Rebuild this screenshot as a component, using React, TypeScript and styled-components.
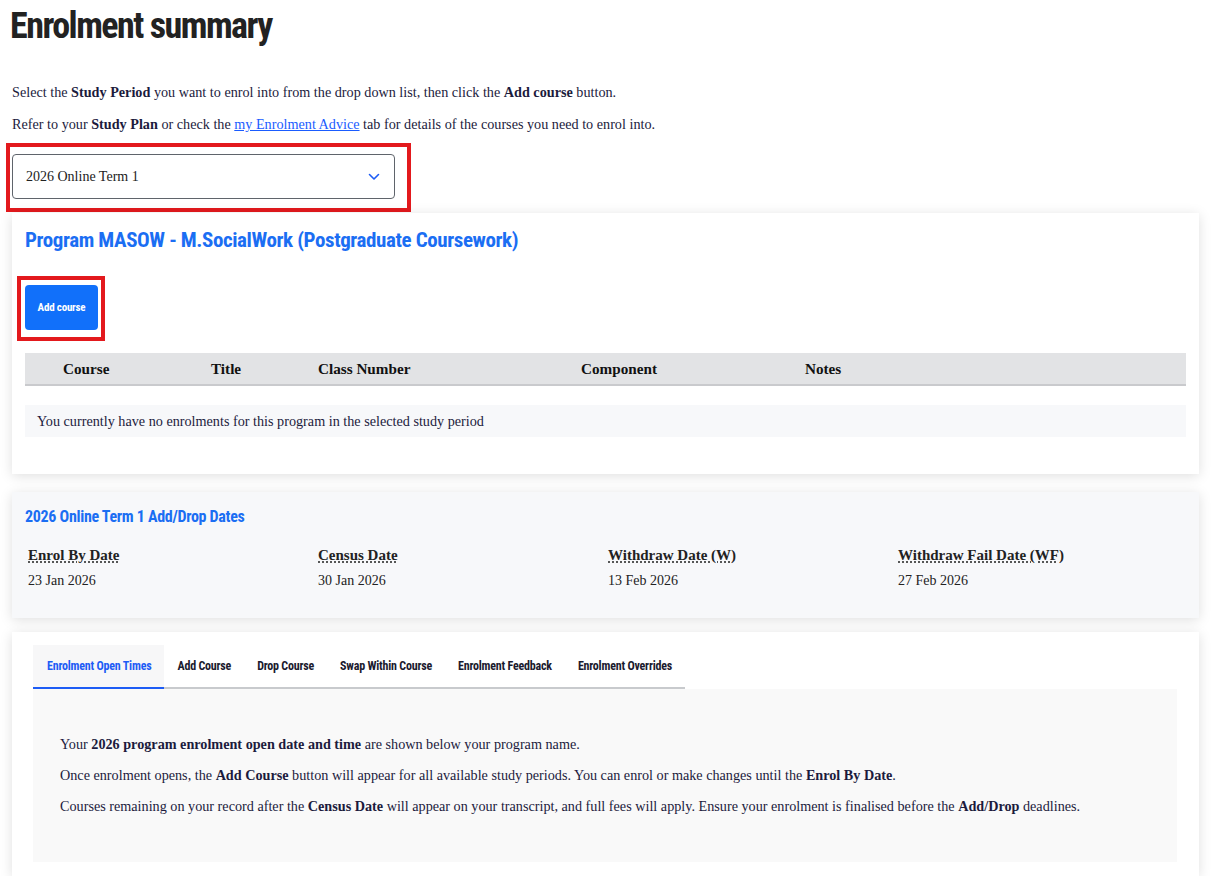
import React from "react";
import styled, { createGlobalStyle } from "styled-components";

const GlobalStyle = createGlobalStyle`
  html, body { margin: 0; padding: 0; background: #fff; }
  body {
    font-family: "Liberation Serif", "DejaVu Serif", serif;
    color: #1c1b3d;
    -webkit-font-smoothing: antialiased;
  }
  * { box-sizing: border-box; }
`;

const condensed = `"Roboto", "Noto Sans", "Open Sans", sans-serif`;

const Page = styled.main`
  padding: 0 24px 0 12px;
  display: flex;
  flex-direction: column;
  align-items: stretch;
`;

const Heading = styled.h1`
  font-family: ${condensed};
  font-stretch: 75%;
  font-weight: 700;
  font-size: 36px;
  line-height: 46px;
  color: #222;
  margin: 3px 0 0 -2px;
  letter-spacing: -1.5px;
`;

const Para = styled.p<{ $top?: number }>`
  font-size: 14.2px;
  line-height: 20px;
  margin: ${(p) => p.$top ?? 0}px 0 0 0;
  b { font-weight: 700; }
  a { color: #1a5cff; text-decoration: underline; }
`;

const Highlight = styled.div<{ $pad: string; $ml: number; $mt: number }>`
  align-self: flex-start;
  border: 4px solid #e3191d;
  padding: ${(p) => p.$pad};
  margin-left: ${(p) => p.$ml}px;
  margin-top: ${(p) => p.$mt}px;
`;

const Select = styled.div`
  width: 383px;
  height: 45px;
  border: 1px solid #5f646b;
  border-radius: 4px;
  display: flex;
  align-items: center;
  justify-content: space-between;
  padding: 0 14px 0 13px;
  font-size: 14px;
  color: #222;
`;

const Card = styled.section<{ $bg?: string; $mt: number }>`
  background: ${(p) => p.$bg ?? "#fff"};
  box-shadow: 0 2px 12px rgba(0, 0, 0, 0.13);
  margin-top: ${(p) => p.$mt}px;
  display: flex;
  flex-direction: column;
`;

const ProgramCard = styled(Card)`
  padding: 14px 13px 37px 13px;
  height: 261px;
`;

const CardTitle = styled.h2<{ $size: number; $ls: number }>`
  font-family: ${condensed};
  font-stretch: 75%;
  font-weight: 700;
  font-size: ${(p) => p.$size}px;
  letter-spacing: ${(p) => p.$ls}px;
  line-height: 1.25;
  color: #1b6ef3;
  margin: 0;
`;

const Button = styled.button`
  width: 73px;
  height: 45px;
  border: none;
  border-radius: 4px;
  background: #1170fa;
  color: #fff;
  font-family: ${condensed};
  font-stretch: 75%;
  font-weight: 700;
  font-size: 11px;
  letter-spacing: -0.2px;
  padding: 0;
`;

const TableHead = styled.div`
  margin-top: 12px;
  height: 33px;
  background: #e2e3e5;
  border-bottom: 2px solid #c9cacd;
  display: grid;
  grid-template-columns: 148px 107px 263px 224px 1fr;
  align-items: center;
  padding-left: 38px;
  font-weight: 700;
  font-size: 15.2px;
  color: #111;
`;

const EmptyRow = styled.div`
  margin-top: 19px;
  height: 32px;
  background: #f7f8fa;
  display: flex;
  align-items: center;
  padding-left: 12px;
  font-size: 14.2px;
`;

const DatesCard = styled(Card)`
  padding: 15px 13px 0 13px;
  height: 126px;
`;

const DatesGrid = styled.div`
  display: grid;
  grid-template-columns: repeat(4, 290px);
  margin-top: 18px;
  padding-left: 3px;
`;

const DateCol = styled.div`
  display: flex;
  flex-direction: column;
  gap: 6px;
`;

const DateLabel = styled.abbr`
  font-weight: 700;
  font-size: 15px;
  line-height: 20px;
  color: #222;
  text-decoration: underline dotted;
  text-underline-offset: 2px;
  align-self: flex-start;
`;

const DateValue = styled.span`
  font-size: 14px;
  line-height: 20px;
  color: #222;
`;

const TabsCard = styled(Card)`
  padding: 13px 22px 14px 21px;
`;

const TabBar = styled.div`
  display: flex;
  align-self: flex-start;
  border-bottom: 2px solid #c8cacd;
`;

const Tab = styled.div<{ $active?: boolean }>`
  height: 44px;
  margin-bottom: -2px;
  display: flex;
  align-items: center;
  padding: 0 13px 0 ${(p) => (p.$active ? 14 : 13)}px;
  background: ${(p) => (p.$active ? "#f7f7f8" : "transparent")};
  border-bottom: 2px solid ${(p) => (p.$active ? "#1d5cf5" : "transparent")};
  color: ${(p) => (p.$active ? "#1d5cf5" : "#1a1a2e")};
  font-family: ${condensed};
  font-stretch: 75%;
  font-weight: 700;
  font-size: 12px;
  letter-spacing: -0.2px;
`;

const TabPanel = styled.div`
  background: #f9f9f9;
  height: 173px;
  padding: 45px 27px 0 27px;
  display: flex;
  flex-direction: column;
  gap: 11px;
`;

const PanelText = styled.p`
  margin: 0;
  font-size: 14.2px;
  line-height: 20px;
  b { font-weight: 700; }
`;

const Chevron = () => (
  <svg width="12" height="8" viewBox="0 0 12 8" fill="none">
    <polyline points="1.5,1.5 6,6 10.5,1.5" stroke="#1d5cf5" strokeWidth="1.6" strokeLinecap="round" strokeLinejoin="round" />
  </svg>
);

const dates = [
  { label: "Enrol By Date", value: "23 Jan 2026" },
  { label: "Census Date", value: "30 Jan 2026" },
  { label: "Withdraw Date (W)", value: "13 Feb 2026" },
  { label: "Withdraw Fail Date (WF)", value: "27 Feb 2026" },
];

const tabs = [
  "Enrolment Open Times",
  "Add Course",
  "Drop Course",
  "Swap Within Course",
  "Enrolment Feedback",
  "Enrolment Overrides",
];

export default function App() {
  return (
    <>
      <GlobalStyle />
      <Page>
        <Heading>Enrolment summary</Heading>
        <Para $top={33}>
          Select the <b>Study Period</b> you want to enrol into from the drop down list, then click the <b>Add course</b> button.
        </Para>
        <Para $top={12}>
          Refer to your <b>Study Plan</b> or check the <a href="#">my Enrolment Advice</a> tab for details of the courses you need to enrol into.
        </Para>
        <Highlight $pad="7px 12px 9px 2px" $ml={-6} $mt={9}>
          <Select>
            <span>2026 Online Term 1</span>
            <Chevron />
          </Select>
        </Highlight>

        <ProgramCard $mt={1}>
          <CardTitle $size={21} $ls={-0.4}>Program MASOW - M.SocialWork (Postgraduate Coursework)</CardTitle>
          <Highlight $pad="5px 3px 7px 4px" $ml={-8} $mt={23}>
            <Button>Add course</Button>
          </Highlight>
          <TableHead>
            <span>Course</span>
            <span>Title</span>
            <span>Class Number</span>
            <span>Component</span>
            <span>Notes</span>
          </TableHead>
          <EmptyRow>You currently have no enrolments for this program in the selected study period</EmptyRow>
        </ProgramCard>

        <DatesCard $bg="#f7f8fa" $mt={18}>
          <CardTitle $size={16} $ls={-0.3}>2026 Online Term 1 Add/Drop Dates</CardTitle>
          <DatesGrid>
            {dates.map((d) => (
              <DateCol key={d.label}>
                <DateLabel>{d.label}</DateLabel>
                <DateValue>{d.value}</DateValue>
              </DateCol>
            ))}
          </DatesGrid>
        </DatesCard>

        <TabsCard $mt={14}>
          <TabBar>
            {tabs.map((t, i) => (
              <Tab key={t} $active={i === 0}>{t}</Tab>
            ))}
          </TabBar>
          <TabPanel>
            <PanelText>
              Your <b>2026 program enrolment open date and time</b> are shown below your program name.
            </PanelText>
            <PanelText>
              Once enrolment opens, the <b>Add Course</b> button will appear for all available study periods. You can enrol or make changes until the <b>Enrol By Date</b>.
            </PanelText>
            <PanelText>
              Courses remaining on your record after the <b>Census Date</b> will appear on your transcript, and full fees will apply. Ensure your enrolment is finalised before the <b>Add/Drop</b> deadlines.
            </PanelText>
          </TabPanel>
        </TabsCard>
      </Page>
    </>
  );
}
